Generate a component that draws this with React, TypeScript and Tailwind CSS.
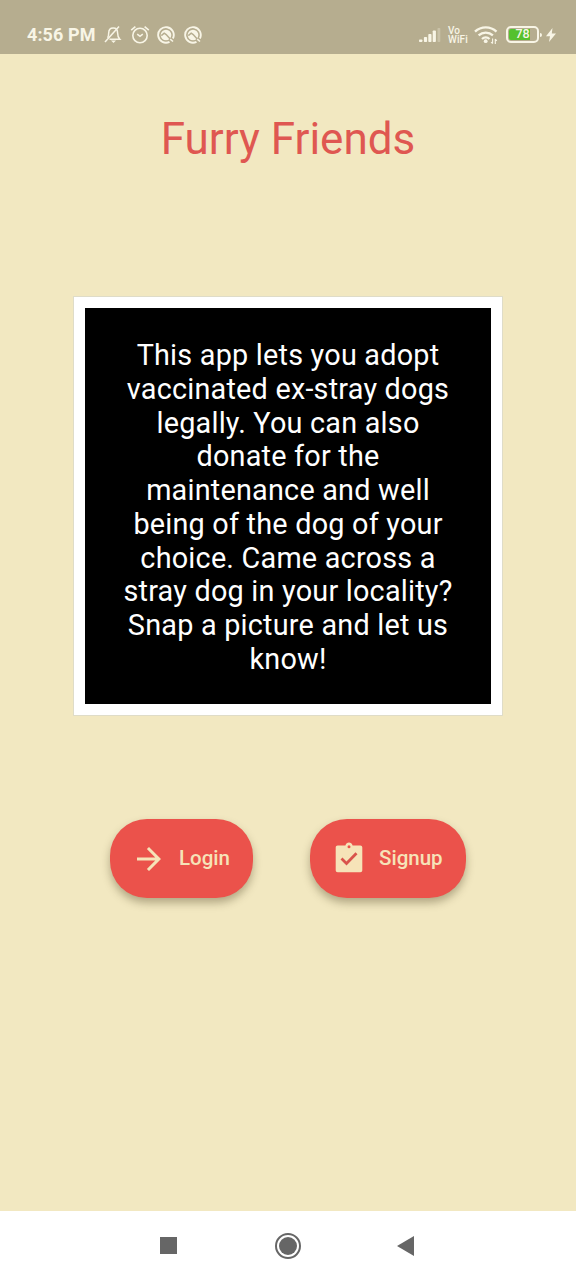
import type { ReactNode } from "react";
import { MdArrowForward } from "react-icons/md";

function BellOffIcon() {
  return (
    <svg width="18" height="19" viewBox="0 0 18 19" fill="none" stroke="currentColor" strokeWidth="1.5">
      <path d="M3.5 12.8c.9-1 1.2-2.2 1.2-4.8 0-3 1.7-5 4.5-5s4.4 2 4.4 5c0 3.3.6 4.6 2.2 6.3H5.5" />
      <path d="M1 17 15 1.5" />
      <path d="M7 15.5h5L9.5 18z" fill="currentColor" stroke="none" />
    </svg>
  );
}

function AlarmIcon() {
  return (
    <svg width="20" height="20" viewBox="0 0 20 20" fill="none" stroke="currentColor" strokeWidth="1.6">
      <circle cx="10" cy="10.5" r="7.2" />
      <path d="M1.2 5.2 5.4 1.7M18.8 5.2 14.6 1.7M7.2 9.2l2.8 2.1 2.8-2.1" />
    </svg>
  );
}

function AppBadgeIcon() {
  return (
    <svg width="18" height="18" viewBox="0 0 18 18" fill="none" stroke="currentColor">
      <path d="M12.5 15.9A7.8 7.8 0 1 1 15.9 12.5" strokeWidth="1.9" />
      <circle cx="9" cy="9" r="5.3" fill="currentColor" stroke="none" />
      <path d="M4.3 9.6 7.2 7.2l2 1.3 4 4.5" stroke="#b6ad8f" strokeWidth="1.5" />
      <path d="m13.2 13.2 2.8 2.3" strokeWidth="1.6" />
    </svg>
  );
}

function SignalIcon() {
  return (
    <svg width="22" height="16" viewBox="0 0 22 16" fill="currentColor">
      <rect x="0" y="12.5" width="3.4" height="2.5" rx=".8" />
      <rect x="4.9" y="10" width="3.2" height="5" rx=".8" />
      <rect x="9.3" y="7" width="3.2" height="8" rx=".8" />
      <rect x="13.7" y="3.5" width="3.2" height="11.5" rx=".8" />
      <rect x="18.5" y="1" width="2.8" height="14" rx=".8" opacity=".3" />
    </svg>
  );
}

function WifiIcon() {
  return (
    <svg width="24" height="20" viewBox="0 0 24 20" fill="none" stroke="currentColor" strokeWidth="2.3">
      <path d="M1 6.7a15.5 15.5 0 0 1 21.5 0M4.6 10.4a10.5 10.5 0 0 1 14.3 0M8 14a5.5 5.5 0 0 1 7.5 0" />
      <circle cx="11.7" cy="16.2" r="1.9" fill="currentColor" stroke="none" />
      <path d="M18.6 13.5v5m-1.5-1.5 1.5 1.7M21.3 19v-5m0 0 1.5 1.8" strokeWidth="1.1" />
    </svg>
  );
}

function ClipboardCheckIcon() {
  return (
    <svg width="36" height="36" viewBox="0 0 36 36">
      <path
        fill="currentColor"
        fillRule="evenodd"
        d="M6.7 4.5h7.7C14.9 2.7 16.3 1.6 18 1.6s3.1 1.1 3.6 2.9h7.7c1.2 0 2 .8 2 2v22.800c0 1.200-.8 2-2 2H6.700c-1.200 0-2-.8-2-2V6.500c0-1.200.8-2 2-2zM18 4.300a1.500 1.500 0 1 0 0 3 1.500 1.500 0 0 0 0-3z"
      />
      <path d="m10.5 17.500 5 5 10-10.300" fill="none" stroke="#d9534b" strokeWidth="2.8" />
    </svg>
  );
}

function Battery({ level }: { level: number }) {
  return (
    <div className="flex items-center">
      <div className="flex h-[17px] w-[33px] items-center rounded-[5px] border-2 border-[#f8f5e6] p-px">
        <div className="relative h-full w-full">
          <div className="h-full rounded-l-[2px] bg-[#55c12e]" style={{ width: `${level}%` }} />
          <span className="absolute inset-0 flex items-center justify-center text-[12.5px] leading-none font-medium">
            {level}
          </span>
        </div>
      </div>
      <div className="ml-px h-1 w-0.5 rounded-r-sm bg-[#f8f5e6]" />
    </div>
  );
}

function StatusBar() {
  return (
    <header className="flex h-[54px] items-center bg-[#b6ad8f] pt-[15px] pr-[19px] pl-[27px] text-[#f8f5e6]">
      <span className="w-[77px] text-[18px] leading-none font-bold tracking-[0.1px] whitespace-nowrap">4:56 PM</span>
      <BellOffIcon />
      <div className="ml-2 flex items-center">
        <AlarmIcon />
        <div className="ml-[7px] flex gap-[9px]">
          <AppBadgeIcon />
          <AppBadgeIcon />
        </div>
      </div>
      <div className="ml-auto flex items-center">
        <SignalIcon />
        <div className="ml-[7px] w-[20px] text-[10px] leading-[9px] font-medium tracking-[0.1px] whitespace-nowrap">
          Vo
          <br />
          WiFi
        </div>
        <div className="ml-[6px]">
          <WifiIcon />
        </div>
        <div className="ml-[8px]">
          <Battery level={78} />
        </div>
        <svg className="ml-[3px]" width="12" height="14" viewBox="0 0 12 14" fill="currentColor">
          <path d="M7.5 0 1 8.2h4L4 14l7-8.500H6.800z" />
        </svg>
      </div>
    </header>
  );
}

function PillButton({ icon, label, className }: { icon: ReactNode; label: string; className: string }) {
  return (
    <button
      className={`flex h-[79px] items-center gap-3 rounded-[37px] bg-[#eb524b] pl-[21px] text-[20.5px] font-medium text-[#f6e3b8] shadow-[0_5px_9px_rgba(60,50,20,0.35)] ${className}`}
    >
      {icon}
      {label}
    </button>
  );
}

function NavBar() {
  return (
    <nav className="flex h-[69px] items-center bg-white pl-[160px] text-[#666666]">
      <div className="h-[17px] w-[17px] bg-[#666666]" />
      <svg className="ml-[98px]" width="26" height="26" viewBox="0 0 26 26">
        <circle cx="13" cy="13" r="12" fill="none" stroke="currentColor" strokeWidth="2" />
        <circle cx="13" cy="13" r="9" fill="currentColor" />
      </svg>
      <svg className="ml-[96px]" width="17" height="20" viewBox="0 0 17 20" fill="currentColor">
        <path d="M17 0v20L0 10z" />
      </svg>
    </nav>
  );
}

export default function App() {
  return (
    <div className="flex h-[1280px] w-[576px] flex-col bg-[#f2e8c1] font-['Roboto',sans-serif]">
      <StatusBar />
      <main className="flex flex-1 flex-col items-center">
        <h1 className="mt-[59px] text-[44px] leading-[52px] whitespace-nowrap text-[#df5751]">Furry Friends</h1>
        <section className="mt-[131px] h-[420px] w-[430px] border border-[#dfdcc8] bg-white p-[11px]">
          <p className="h-full bg-black px-[34px] pt-[31px] text-center text-[28.8px] leading-[33.75px] tracking-[0.22px] text-white">
            This app lets you adopt vaccinated ex-stray dogs legally. You can also donate for the maintenance and well
            being of the dog of your choice. Came across a stray dog in your locality? Snap a picture and let us know!
          </p>
        </section>
        <div className="mt-[103px] flex gap-[57px]">
          <PillButton icon={<MdArrowForward size={36} />} label="Login" className="w-[143px]" />
          <PillButton icon={<ClipboardCheckIcon />} label="Signup" className="w-[156px]" />
        </div>
      </main>
      <NavBar />
    </div>
  );
}
